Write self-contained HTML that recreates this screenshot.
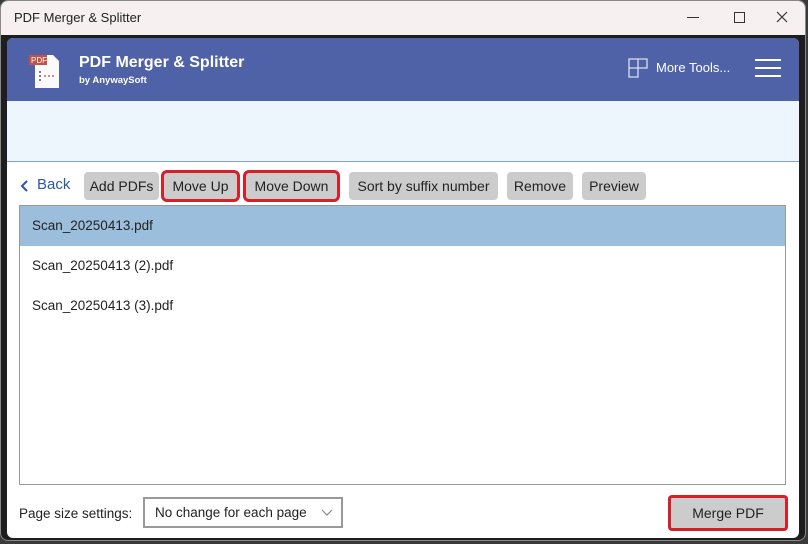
<!DOCTYPE html>
<html><head><style>
body{margin:0;width:808px;height:544px;overflow:hidden;background:#3a3a3a;font-family:"Liberation Sans",sans-serif;position:relative}
.win{position:absolute;left:0;top:0;width:806px;height:541px;background:#1e1e1e;border-radius:8px;border:1px solid #888;box-sizing:border-box;overflow:hidden}
.tb{position:absolute;left:0;top:0;right:0;height:34px;background:#f7f0f0}
.app{position:absolute;left:6px;top:37px;width:792px;height:500px;background:#fff;border-radius:6px 6px 6px 6px;overflow:hidden}
.hdr{position:absolute;left:0;top:0;right:0;height:63px;background:#4f62a7;color:#fff}
.band{position:absolute;left:0;top:63px;right:0;height:60px;background:#eef6fd;border-bottom:1px solid #8aa0b4}
.btn{position:absolute;top:134px;height:28px;background:#cccccc;border-radius:4px;font-size:14px;line-height:28px;text-align:center;color:#222}
.red{outline:3px solid #d5202c;outline-offset:-1px}
.list{position:absolute;left:12px;top:167px;width:767px;height:280px;border:1px solid #999;box-sizing:border-box}
.row{height:40px;line-height:40px;padding-left:12px;font-size:13.5px;color:#222}
</style></head><body>
<div class="win">
 <div class="tb">
  <div style="position:absolute;left:13px;top:9px;font-size:13px;color:#222">PDF Merger &amp; Splitter</div>
  <div style="position:absolute;left:686px;top:16px;width:12px;height:1px;background:#333"></div>
  <div style="position:absolute;left:733px;top:11px;width:9px;height:9px;border:1px solid #333"></div>
  <svg style="position:absolute;left:775px;top:10px" width="12" height="12"><path d="M1 1L11 11M11 1L1 11" stroke="#333" stroke-width="1.2"/></svg>
 </div>
 <div class="app">
  <div class="hdr">
   <svg style="position:absolute;left:20px;top:14px" width="36" height="38">
    <path d="M8 3H26L32 9V36H8Z" fill="#fafafa"/>
    <rect x="2" y="3" width="18" height="10" fill="#c0524a"/>
    <text x="4" y="11" font-size="8" fill="#fff" font-family="Liberation Sans">PDF</text>
    <circle cx="13" cy="20" r="1" fill="#555"/><circle cx="13" cy="24" r="1" fill="#555"/><circle cx="13" cy="28" r="1" fill="#555"/>
    <circle cx="18" cy="24" r="1" fill="#c66"/><circle cx="22" cy="24" r="1" fill="#c66"/><circle cx="26" cy="24" r="1" fill="#c66"/>
   </svg>
   <div style="position:absolute;left:72px;top:16px;font-size:16px;font-weight:bold">PDF Merger &amp; Splitter</div>
   <div style="position:absolute;left:72px;top:37px;font-size:9.5px;font-weight:bold">by AnywaySoft</div>
   <svg style="position:absolute;left:621px;top:20px" width="20" height="20"><path d="M1 1H19V10H10V19H1ZM1 10H10V1" fill="none" stroke="#dde" stroke-width="1.3"/></svg>
   <div style="position:absolute;left:649px;top:22px;font-size:13px">More Tools...</div>
   <div style="position:absolute;left:748px;top:21px;width:26px;height:2px;background:#fff;box-shadow:0 8px 0 #fff,0 16px 0 #fff"></div>
  </div>
  <div class="band"></div>
  <svg style="position:absolute;left:13px;top:141px" width="10" height="14"><path d="M7 2L2 7L7 12" fill="none" stroke="#2a5a9c" stroke-width="2"/></svg>
  <div style="position:absolute;left:30px;top:138px;font-size:15px;color:#2a5a9c">Back</div>
  <div class="btn" style="left:77px;width:75px">Add PDFs</div>
  <div class="btn red" style="left:156px;width:75px">Move Up</div>
  <div class="btn red" style="left:238px;width:93px">Move Down</div>
  <div class="btn" style="left:342px;width:149px">Sort by suffix number</div>
  <div class="btn" style="left:500px;width:66px">Remove</div>
  <div class="btn" style="left:575px;width:64px">Preview</div>
  <div class="list">
   <div class="row" style="background:#9bbedc">Scan_20250413.pdf</div>
   <div class="row">Scan_20250413 (2).pdf</div>
   <div class="row">Scan_20250413 (3).pdf</div>
  </div>
  <div style="position:absolute;left:12px;top:468px;font-size:13.5px;color:#222">Page size settings:</div>
  <div style="position:absolute;left:136px;top:459px;width:200px;height:31px;border:2px solid #999;box-sizing:border-box;font-size:13.5px;line-height:27px;padding-left:10px;color:#222">No change for each page
   <svg style="position:absolute;right:8px;top:10px" width="12" height="8"><path d="M1 1L6 6L11 1" fill="none" stroke="#888" stroke-width="1.2"/></svg></div>
  <div class="btn red" style="left:663px;top:459px;width:116px;height:32px;line-height:32px;border-radius:2px">Merge PDF</div>
 </div>
</div>
</body></html>
